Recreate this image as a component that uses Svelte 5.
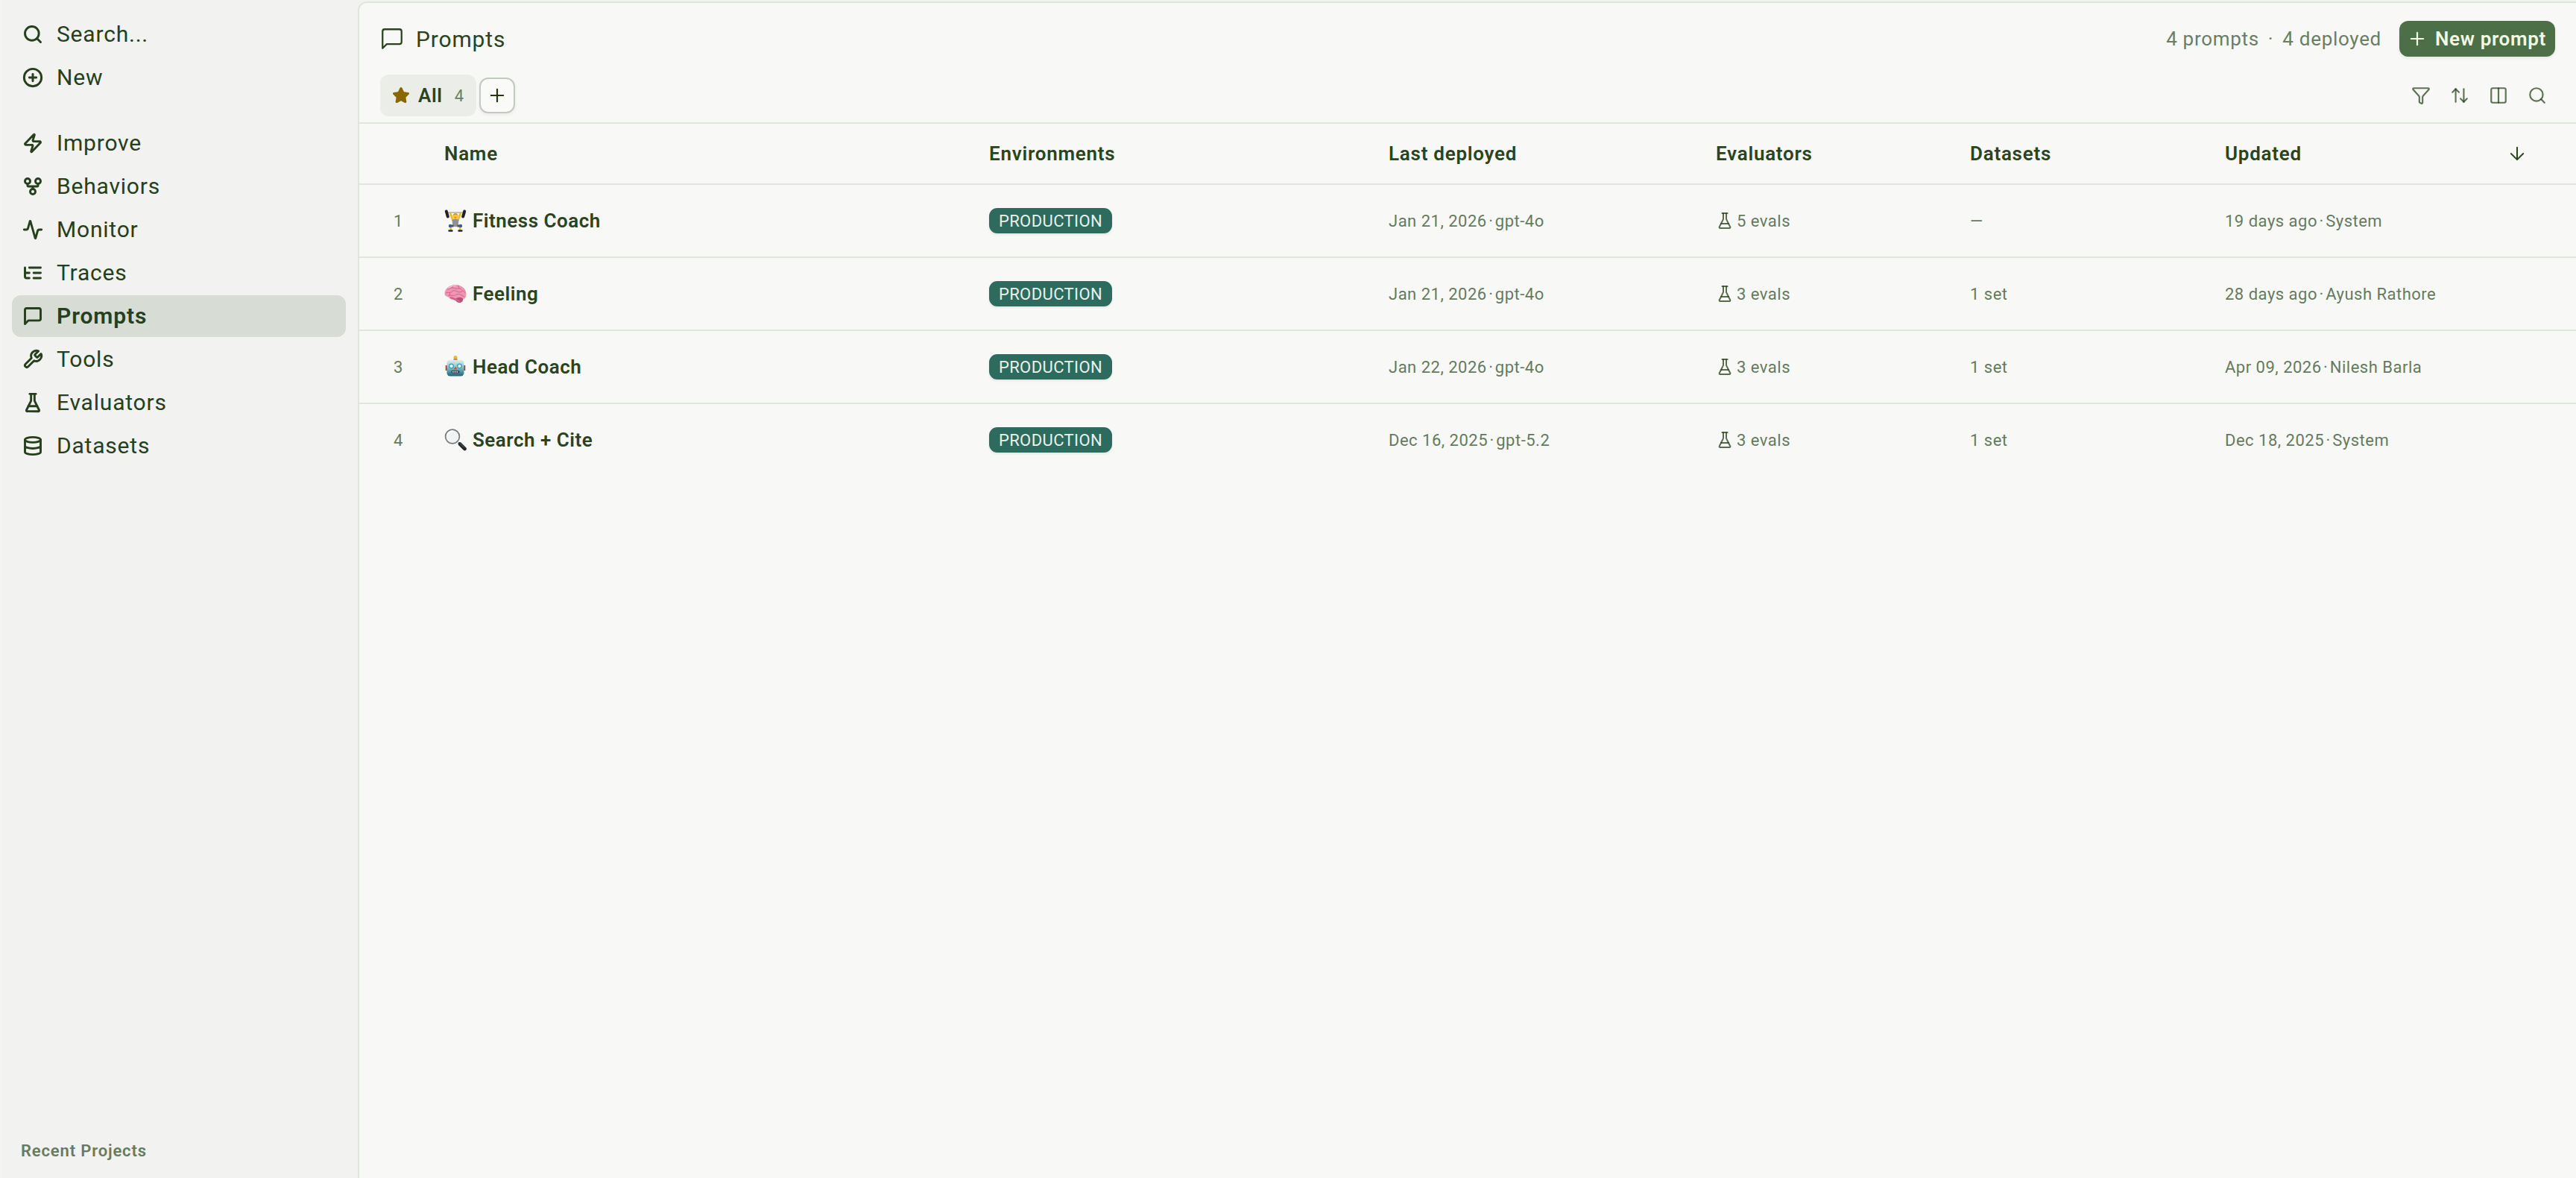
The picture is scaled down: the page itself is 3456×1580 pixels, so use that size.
<script>
  const icons = {
    search: '<circle cx="11" cy="11" r="8"/><path d="m21 21-4.3-4.3"/>',
    circlePlus: '<circle cx="12" cy="12" r="10"/><path d="M8 12h8M12 8v8"/>',
    zap: '<path d="M4 14a1 1 0 0 1-.78-1.63l9.9-10.2a.5.5 0 0 1 .86.46l-1.92 6.02A1 1 0 0 0 13 10h7a1 1 0 0 1 .78 1.63l-9.9 10.2a.5.5 0 0 1-.86-.46l1.92-6.02A1 1 0 0 0 11 14z"/>',
    fork: '<circle cx="12" cy="18" r="3"/><circle cx="6" cy="6" r="3"/><circle cx="18" cy="6" r="3"/><path d="M18 9v2c0 .6-.4 1-1 1H7c-.6 0-1-.4-1-1V9M12 12v3"/>',
    activity: '<path d="M22 12h-2.48a2 2 0 0 0-1.93 1.46l-2.35 8.36a.25.25 0 0 1-.48 0L9.24 2.18a.25.25 0 0 0-.48 0l-2.35 8.36A2 2 0 0 1 4.49 12H2"/>',
    tree: '<path d="M21 12h-8M21 6H8M21 18h-8M3 6v4c0 1.1.9 2 2 2h3M3 10v6c0 1.1.9 2 2 2h3"/>',
    message: '<path d="M21 15a2 2 0 0 1-2 2H7l-4 4V5a2 2 0 0 1 2-2h14a2 2 0 0 1 2 2z"/>',
    wrench: '<path d="M14.7 6.3a1 1 0 0 0 0 1.4l1.6 1.6a1 1 0 0 0 1.4 0l3.77-3.77a6 6 0 0 1-7.94 7.94l-6.91 6.91a2.12 2.12 0 0 1-3-3l6.91-6.91a6 6 0 0 1 7.94-7.94l-3.76 3.76z"/>',
    flask: '<path d="M10 2v7.527a2 2 0 0 1-.211.896L4.72 20.55a1 1 0 0 0 .9 1.45h12.76a1 1 0 0 0 .9-1.45l-5.069-10.127A2 2 0 0 1 14 9.527V2"/><path d="M8.5 2h7"/><path d="M7 16h10"/>',
    database: '<ellipse cx="12" cy="5" rx="9" ry="3"/><path d="M3 5V19A9 3 0 0 0 21 19V5M3 12A9 3 0 0 0 21 12"/>',
    plus: '<path d="M5 12h14M12 5v14"/>',
    filter: '<path d="M10 20a1 1 0 0 0 .553.895l2 1A1 1 0 0 0 14 21v-7a2 2 0 0 1 .517-1.341L21.74 4.67A1 1 0 0 0 21 3H3a1 1 0 0 0-.742 1.67l7.225 7.989A2 2 0 0 1 10 14z"/>',
    sort: '<path d="m21 16-4 4-4-4"/><path d="M17 20V4"/><path d="m3 8 4-4 4 4"/><path d="M7 4v16"/>',
    columns: '<rect x="3" y="3" width="18" height="18" rx="2"/><path d="M12 3v18"/>',
    down: '<path d="M12 5v14M19 12l-7 7-7-7"/>',
    star: '<path d="M11.525 2.295a.53.53 0 0 1 .95 0l2.31 4.679a2.123 2.123 0 0 0 1.595 1.16l5.166.756a.53.53 0 0 1 .294.904l-3.736 3.638a2.123 2.123 0 0 0-.611 1.878l.882 5.14a.53.53 0 0 1-.771.56l-4.618-2.428a2.122 2.122 0 0 0-1.973 0L6.396 21.01a.53.53 0 0 1-.77-.56l.881-5.139a2.122 2.122 0 0 0-.611-1.879L2.16 9.795a.53.53 0 0 1 .294-.906l5.165-.755a2.122 2.122 0 0 0 1.597-1.16z"/>'
  };

  const actions = [
    { icon: 'search', label: 'Search...' },
    { icon: 'circlePlus', label: 'New' }
  ];
  const nav = [
    { icon: 'zap', label: 'Improve' },
    { icon: 'fork', label: 'Behaviors' },
    { icon: 'activity', label: 'Monitor' },
    { icon: 'tree', label: 'Traces' },
    { icon: 'message', label: 'Prompts', active: true },
    { icon: 'wrench', label: 'Tools' },
    { icon: 'flask', label: 'Evaluators' },
    { icon: 'database', label: 'Datasets' }
  ];
  const columns = ['Name', 'Environments', 'Last deployed', 'Evaluators', 'Datasets'];
  const rows = [
    { emoji: 'lifter', name: 'Fitness Coach', deployed: ['Jan 21, 2026', 'gpt-4o'], evals: '5 evals', sets: '—', updated: ['19 days ago', 'System'] },
    { emoji: 'brain', name: 'Feeling', deployed: ['Jan 21, 2026', 'gpt-4o'], evals: '3 evals', sets: '1 set', updated: ['28 days ago', 'Ayush Rathore'] },
    { emoji: 'robot', name: 'Head Coach', deployed: ['Jan 22, 2026', 'gpt-4o'], evals: '3 evals', sets: '1 set', updated: ['Apr 09, 2026', 'Nilesh Barla'] },
    { emoji: 'lens', name: 'Search + Cite', deployed: ['Dec 16, 2025', 'gpt-5.2'], evals: '3 evals', sets: '1 set', updated: ['Dec 18, 2025', 'System'] }
  ];
</script>

{#snippet icon(name, cls)}
  <svg class="icon {cls}" viewBox="0 0 24 24">{@html icons[name]}</svg>
{/snippet}

{#snippet emoji(kind)}
  <svg class="emoji" viewBox="0 0 30 30">
    {#if kind === 'lifter'}
      <path d="M5 4h20" stroke="#9a9da0" stroke-width="1.2" />
      <path d="M8 5l3.500 9h7L22 5" fill="none" stroke="#f5b52e" stroke-width="2.800" stroke-linecap="round" stroke-linejoin="round" />
      <path d="M10.500 14l4.500-2 4.500 2-1 9h-7z" fill="#8e9297" />
      <circle cx="15" cy="9" r="3.500" fill="#f9c22f" />
      <path d="M11.700 8.500q.2-3.500 3.300-3.500t3.300 3.500l-1.500-1.500h-3.500z" fill="#d99513" />
      <path d="M13.500 10.500q1.500 1.600 3 0z" fill="#9b3c1d" />
      <path d="M12 21l-3.500 2 .5 5M18 21l3.500 2-.5 5" fill="none" stroke="#f5b52e" stroke-width="2.200" />
      <path d="M8.500 22h4M17.500 22h4" stroke="#4c5660" stroke-width="3" />
      <circle cx="8" cy="22" r="2.200" fill="#2d6399" /><circle cx="22" cy="22" r="2.200" fill="#2d6399" />
      <path d="M6.500 28.500h4M19.500 28.500h4" stroke="#24272c" stroke-width="2.400" stroke-linecap="round" />
      <path d="M2.800 2.500l2 7M27.200 2.500l-2 7" stroke="#202226" stroke-width="4" stroke-linecap="round" />
    {:else if kind === 'brain'}
      <path d="M.5 15C.5 8 7 3 15 3s14.500 5 14.500 12.500c0 5-3 7-6 7.500l-9-1c-5 2-8-.5-9-3-3 0-5-1.500-5-4z" fill="#f095b3" />
      <path d="M15 22.500c1-3 8-4 10-1 .8 3-1.500 5.500-4.500 5.500-3 0-5.500-2-5.500-4.500z" fill="#b95278" />
      <path d="M9 20c4 2 7 3 11 5" stroke="#d46289" stroke-width="2.500" fill="none" stroke-linecap="round" />
      <path d="M2 14c3-2 4 1 7-1s3-3 6-2 5 3 8 1 4 0 5 2M5 9c3 0 3-2 6-2s4 2 7 1 4 0 6 2M5.500 18c3-3 6 1 9-1s7-2 9 0M12 4l-1 3M19 4l1 4M23 17l4 2M8 13l-1 4" stroke="#d0688f" stroke-width="1" fill="none" stroke-linecap="round" />
      <path d="M6 7q4-3 9-2.700" stroke="#ffc6da" stroke-width="1.200" fill="none" stroke-linecap="round" />
    {:else if kind === 'robot'}
      <defs>
        <linearGradient id="steel" x2="0" y2="1"><stop offset="0" stop-color="#e3efec" /><stop offset=".45" stop-color="#91c5c8" /><stop offset="1" stop-color="#14667b" /></linearGradient>
      </defs>
      <circle cx="15" cy="2.500" r="2.500" fill="#efb63b" /><path d="M12.500 5.500h5" stroke="#6e4455" stroke-width="2" />
      <path d="M3 13v7M27 13v7" stroke="#b33246" stroke-width="2.500" />
      <rect x="3.500" y="5.500" width="23" height="22" rx="4.500" fill="url(#steel)" />
      <circle cx="9.500" cy="14" r="3.600" fill="#36a8c2" /><circle cx="20.500" cy="14" r="3.600" fill="#36a8c2" />
      <circle cx="9.500" cy="14" r="2.100" fill="#fff" /><circle cx="20.500" cy="14" r="2.100" fill="#fff" />
      <path d="M15 14.500l2.500 4h-5z" fill="#dc4a4a" />
      <rect x="9.500" y="20" width="11" height="3.500" rx="1" fill="#453f48" />
      <path d="M11 21.700h8" stroke="#eee" stroke-width="1.600" stroke-dasharray="1.600 1.200" />
    {:else}
      <path d="M19 18.500l3.500 3.500" stroke="#8a8d8e" stroke-width="2" />
      <path d="M21 20.500l6.500 6.500" stroke="#252628" stroke-width="4.600" stroke-linecap="round" />
      <path d="M21.500 20l5 5" stroke="#77797b" stroke-width=".8" stroke-linecap="round" />
      <circle cx="11" cy="10.500" r="9.400" fill="#f1f2f4" stroke="#747b7c" stroke-width="1.700" />
      <path d="M4.500 8q2-4.500 6.500-4.800" stroke="#fff" stroke-width="2" fill="none" stroke-linecap="round" />
    {/if}
  </svg>
{/snippet}

{#snippet navItem(item)}
  <a class="nav-item" class:active={item.active}>
    {@render icon(item.icon, 'nav-icon')}
    <span>{item.label}</span>
  </a>
{/snippet}

{#snippet pair(parts)}
  {parts[0]}<span class="sep">{' · '}</span>{parts[1]}
{/snippet}

<div class="app">
  <aside>
    <nav>{#each actions as item}{@render navItem(item)}{/each}</nav>
    <nav>{#each nav as item}{@render navItem(item)}{/each}</nav>
    <div class="recent">Recent Projects</div>
  </aside>

  <main>
    <header>
      <div class="title">{@render icon('message', 'title-icon')}<h1>Prompts</h1></div>
      <div class="summary"><span>4 prompts</span><span class="dot">·</span><span>4 deployed</span></div>
      <button class="primary">{@render icon('plus', 'plus')}<span>New prompt</span></button>
    </header>
    <div class="toolbar">
      <div class="tab">{@render icon('star', 'star')}<b>All</b><span class="count">4</span></div>
      <button class="add">{@render icon('plus', 'plus')}</button>
      <div class="tools">
        {#each ['filter', 'sort', 'columns', 'search'] as name}{@render icon(name, 'tool')}{/each}
      </div>
    </div>

    <div class="row head">
      <div></div>
      {#each columns as label}<div>{label}</div>{/each}
      <div class="sorted"><span>Updated</span>{@render icon('down', 'down')}</div>
    </div>
    {#each rows as row, i}
      <div class="row">
        <div class="num">{i + 1}</div>
        <div class="name">{@render emoji(row.emoji)}<span>{row.name}</span></div>
        <div><span class="badge">PRODUCTION</span></div>
        <div>{@render pair(row.deployed)}</div>
        <div class="evals">{@render icon('flask', 'flask')}<span>{row.evals}</span></div>
        <div>{row.sets}</div>
        <div>{@render pair(row.updated)}</div>
      </div>
    {/each}
  </main>
</div>

<style>
  :global(body) { background: #f2f2f0; }
  .app {
    display: flex;
    height: 1580px;
    box-sizing: border-box;
    border-left: 2px solid #f5f6f4;
    font-family: Roboto, "Liberation Sans", sans-serif;
    color: #2b441f;
    background: #f2f2f0;
  }
  .icon {
    display: block;
    flex: none;
    width: 24px;
    height: 24px;
    fill: none;
    stroke: currentColor;
    stroke-width: 2;
    stroke-linecap: round;
    stroke-linejoin: round;
  }
  button { font: inherit; margin: 0; box-sizing: border-box; }

  aside {
    width: 478px;
    flex: none;
    box-sizing: border-box;
    padding: 18px 16px 0 14px;
    display: flex;
    flex-direction: column;
  }
  nav { display: flex; flex-direction: column; gap: 2px; margin-bottom: 32px; }
  .nav-item {
    display: flex;
    align-items: center;
    gap: 18px;
    height: 56px;
    padding-left: 14px;
    border-radius: 12px;
    font-size: 30px;
    line-height: 34px;
    letter-spacing: 0.8px;
    color: #263f1c;
  }
  .nav-item span { margin-top: -1px; }
  .nav-item.active { background: #d7dcd4; font-weight: 600; letter-spacing: 0.9px; }
  .nav-icon { width: 28px; height: 28px; stroke-width: 2.5; }
  .recent {
    margin: auto 0 22px 12px;
    font-size: 22px;
    line-height: 30px;
    font-weight: 600;
    letter-spacing: 0.85px;
    color: #677b60;
    transform: translateY(1px);
  }

  main {
    flex: 1;
    margin-top: 2px;
    border: 2px solid #e0e6dd;
    border-width: 2px 0 0 2px;
    border-top-left-radius: 12px;
    background: #f8f9f7;
  }
  header { display: flex; align-items: center; height: 96px; padding: 0 28px; }
  .title { display: flex; align-items: center; gap: 15px; flex: 1; }
  .title-icon { width: 34px; height: 34px; stroke-width: 1.6; margin-left: -1px; }
  h1 { margin: 0; font-size: 30px; font-weight: 400; letter-spacing: 0.85px; }
  .summary { display: flex; font-size: 26px; letter-spacing: 0.7px; color: #6b7e65; margin-right: 24px; }
  .dot { margin: 0 12px; }
  .primary {
    display: flex;
    align-items: center;
    gap: 10px;
    width: 209px;
    height: 48px;
    padding: 0 0 0 10px;
    border: 0;
    border-radius: 12px;
    background: #4c6f48;
    color: #f2f8e2;
    font-size: 26px;
    font-weight: 600;
    white-space: nowrap;
    letter-spacing: 0.65px;
    box-shadow: 0 2px 4px rgba(0, 0, 0, 0.08);
  }
  .plus { width: 28px; height: 28px; stroke-width: 1.9; }

  .toolbar { display: flex; align-items: center; height: 56px; padding: 0 39px 8px 28px; border-bottom: 2px solid #e0e6dd; }
  .tab {
    display: flex;
    align-items: center;
    box-sizing: border-box;
    width: 129px;
    height: 56px;
    padding-left: 16px;
    border-radius: 12px;
    background: #ebede9;
  }
  .star { fill: #8a6600; color: #8a6600; stroke-width: 2; }
  .tab b { margin-left: 11px; font-size: 26px; font-weight: 600; letter-spacing: 0.6px; }
  .count { margin-left: 16px; font-size: 22px; color: #6b7e65; }
  .add {
    display: flex;
    align-items: center;
    justify-content: center;
    width: 48px;
    height: 48px;
    margin-left: 4px;
    padding: 0;
    border: 2px solid #c3cabf;
    border-radius: 12px;
    background: #fafbf8;
    color: #26350c;
    box-shadow: 0 2px 4px rgba(0, 0, 0, 0.06);
  }
  .tools { display: flex; gap: 26px; margin-left: auto; color: rgba(43, 68, 31, 0.75); }
  .tool { width: 26px; height: 26px; }

  .row {
    display: grid;
    grid-template-columns: 114px 731px 536px 439px 341px 342px 1fr;
    align-items: center;
    height: 96px;
    border-bottom: 2px solid #e0e6dd;
    font-size: 22px;
    letter-spacing: 0.5px;
    color: #667a60;
  }
  .row > div:last-child { grid-column: 7; }
  .row:last-child { border-bottom: 0; }
  .row.head { height: 80px; font-size: 26px; font-weight: 600; letter-spacing: 0.75px; color: #2b441f; }
  .sep { word-spacing: -3.5px; }
  .num { text-align: center; padding-right: 9px; }
  .name { display: flex; align-items: center; gap: 8px; font-size: 26px; font-weight: 600; letter-spacing: 0.5px; color: #2b441f; }
  .emoji { width: 30px; height: 30px; }
  .badge {
    display: inline-flex;
    align-items: center;
    justify-content: center;
    width: 165px;
    height: 34px;
    border-radius: 11px;
    background: #2c6b5e;
    color: #e9f1ea;
    letter-spacing: 0.4px;
    box-shadow: 0 2px 3px rgba(0, 0, 0, 0.08);
  }
  .evals { display: flex; align-items: center; gap: 4px; }
  .flask { color: rgba(43, 68, 31, 0.78); }
  .sorted { display: flex; align-items: center; justify-content: space-between; padding-right: 65px; }
  .down { width: 28px; height: 28px; stroke-width: 1.7; }
</style>
